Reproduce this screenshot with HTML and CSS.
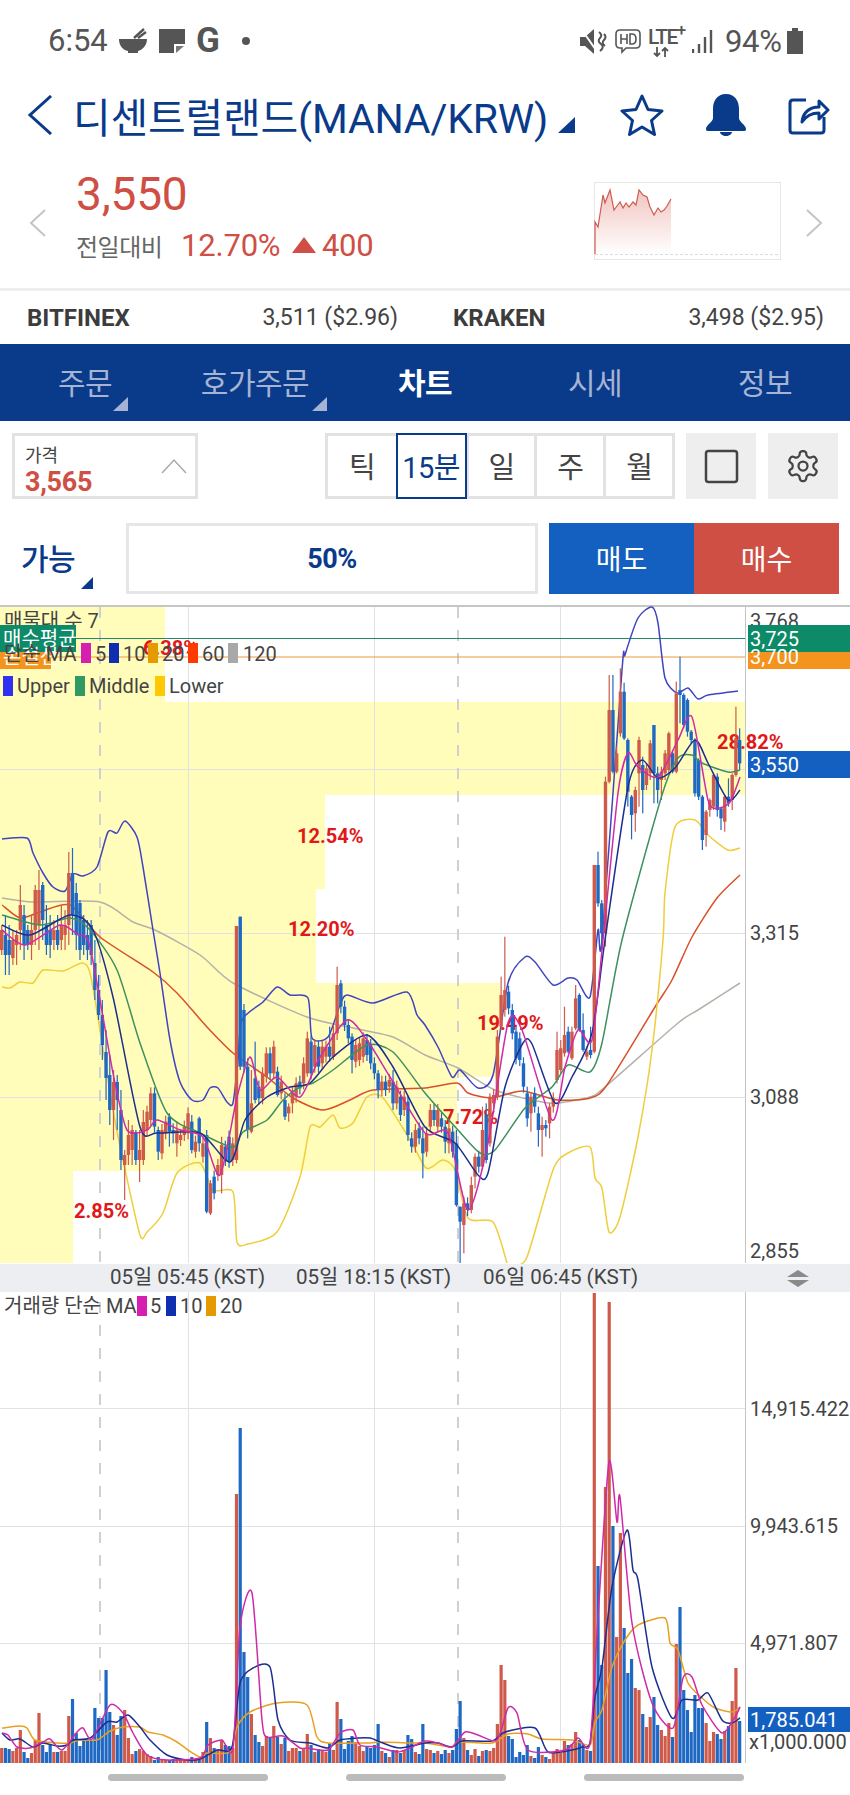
FILE: index.html
```html
<!DOCTYPE html>
<html lang="ko">
<head>
<meta charset="utf-8">
<title>디센트럴랜드 차트</title>
<link rel="stylesheet" href="styles.css">
</head>
<body>
<div class="page">
  <div class="status">
    <span class="clock">6:54</span>
    <svg class="ico-bowl" width="30" height="26" viewBox="0 0 30 26"><path d="M1 11h28c0 7-5 11-9 12v2H10v-2C5 22 1 18 1 11z" fill="#555"/><path d="M16 10L26 1M20 10l8-6" stroke="#555" stroke-width="2.4"/></svg>
    <svg class="ico-note" width="26" height="24" viewBox="0 0 26 24"><path d="M0 0h26v15h-11v9H0z" fill="#555"/><path d="M17 24v-7h8z" fill="#777"/></svg>
    <span class="g">G</span>
    <span class="dot"></span>
    <span class="status-gap"></span>
    <svg class="ico-mute" width="27" height="25" viewBox="0 0 27 25"><path d="M0 8h5l9-8v25l-9-8H0z" fill="#555"/><path d="M2 1l16 23" stroke="#fff" stroke-width="2"/><path d="M19 3q4 3 1 6t1 6-1 7M24 5q3 3 0 6t1 6" fill="none" stroke="#555" stroke-width="2"/></svg>
    <svg class="ico-hd" width="26" height="26" viewBox="0 0 26 26"><path d="M5 2h16q4 0 4 4v10q0 4-4 4H11l-4 4v-4H5q-4 0-4-4V6q0-4 4-4z" fill="none" stroke="#555" stroke-width="1.6"/><path d="M6 6v10M12 6v10M6 11h6M15 6v10h2q4 0 4-5t-4-5z" fill="none" stroke="#555" stroke-width="1.6"/></svg>
    <div class="lte">
      <span class="lte-text">LTE<sup>+</sup></span>
      <svg width="16" height="10" viewBox="0 0 16 10"><path d="M4 0v9M1 6l3 3 3-3M12 10V1M9 4l3-3 3 3" fill="none" stroke="#555" stroke-width="1.8"/></svg>
    </div>
    <svg class="ico-signal" width="22" height="24" viewBox="0 0 22 24"><path d="M1 24v-4M7 24V15M13 24V8M19 24V1" stroke="#555" stroke-width="2.4"/></svg>
    <span class="batt-text">94%</span>
    <svg class="ico-batt" width="16" height="26" viewBox="0 0 16 26"><path d="M5 0h6v3h5v23H0V3h5z" fill="#555"/></svg>
  </div>

  <div class="title-row">
    <svg class="back" width="26" height="40" viewBox="0 0 26 40"><path d="M24 1L3 20l21 19" fill="none" stroke="#0a3a8a" stroke-width="3"/></svg>
    <h1 class="title">디센트럴랜드(MANA/KRW)</h1>
    <span class="title-tri"></span>
    <svg class="star" width="44" height="42" viewBox="0 0 44 42"><path d="M22 2l6 13.500 14 1.500-10.500 9.500 3 14L22 33l-12.500 7.500 3-14L2 17l14-1.500z" fill="none" stroke="#0a3a8a" stroke-width="3" stroke-linejoin="round"/></svg>
    <svg class="bell" width="40" height="42" viewBox="0 0 40 42"><path d="M20 0c9 0 13 7 13 15v9c0 4 7 7 7 11 0 2-1 2-3 2H3c-2 0-3 0-3-2 0-4 7-7 7-11v-9C7 7 11 0 20 0zM14 38h12c0 2-3 4-6 4s-6-2-6-4z" fill="#0a3a8a"/></svg>
    <svg class="share" width="42" height="40" viewBox="0 0 42 40"><path d="M18 5H5Q2 5 2 8v27q0 3 3 3h28q3 0 3-3V22" fill="none" stroke="#0a3a8a" stroke-width="3"/><path d="M14 27c1-10 8-15 17-15V6l9 9-9 9v-6c-8 0-13 3-17 9z" fill="none" stroke="#0a3a8a" stroke-width="3" stroke-linejoin="round"/></svg>
  </div>

  <div class="quote">
    <svg class="nav-l" width="18" height="28" viewBox="0 0 18 28"><path d="M16 1L2 14l14 13" fill="none" stroke="#c4c4c4" stroke-width="2"/></svg>
    <div class="quote-main">
      <div class="price">3,550</div>
      <div class="change"><span class="change-label">전일대비</span><span class="pct">12.70%</span><span class="up-tri"></span><span class="amt">400</span></div>
    </div>
    <svg class="mini" width="187" height="78" viewBox="595 182 187 78">
      <defs><linearGradient id="miniFill" x1="0" y1="0" x2="0" y2="1"><stop offset="0" stop-color="#f1c4bf"/><stop offset="1" stop-color="#fff"/></linearGradient></defs>
      <rect x="595.500" y="182.500" width="186" height="77" fill="#fff" stroke="#e6e6e6"/>
      <path d="M596 254V222L599 227 604 195 606 203 611 190 615 210 618 206 621 202 624 208 627 203 630 207 634 202 637 205 640 190 644 195 648 197 651 207 655 215 659 208 662 212 665 210 668 206 672 199V254z" fill="url(#miniFill)"/>
      <path d="M596 254V222L599 227 604 195 606 203 611 190 615 210 618 206 621 202 624 208 627 203 630 207 634 202 637 205 640 190 644 195 648 197 651 207 655 215 659 208 662 212 665 210 668 206 672 199" fill="none" stroke="#cf5a50" stroke-width="1.200"/>
      <path d="M596 254.500H781" stroke="#ddd" stroke-dasharray="3 2"/>
    </svg>
    <svg class="nav-r" width="18" height="28" viewBox="0 0 18 28"><path d="M2 1l14 13L2 27" fill="none" stroke="#c4c4c4" stroke-width="2"/></svg>
  </div>

  <div class="exchanges">
    <div class="ex ex-a"><b>BITFINEX</b><span>3,511 ($2.96)</span></div>
    <div class="ex ex-b"><b>KRAKEN</b><span>3,498 ($2.95)</span></div>
  </div>

  <nav class="tabs">
    <a class="tab corner">주문</a>
    <a class="tab corner">호가주문</a>
    <a class="tab active">차트</a>
    <a class="tab">시세</a>
    <a class="tab">정보</a>
  </nav>

  <div class="tools">
    <div class="price-box">
      <div class="pb-text"><span class="pb-label">가격</span><span class="pb-val">3,565</span></div>
      <svg width="26" height="16" viewBox="0 0 26 16"><path d="M1 15L13 2l12 13" fill="none" stroke="#aaa" stroke-width="1.500"/></svg>
    </div>
    <div class="seg">
      <span class="seg-i">틱</span>
      <span class="seg-i sel">15분</span>
      <span class="seg-i">일</span>
      <span class="seg-i">주</span>
      <span class="seg-i">월</span>
    </div>
    <div class="sq"><svg width="35" height="35" viewBox="0 0 35 35"><rect x="2" y="2" width="31" height="31" rx="2.500" fill="none" stroke="#444" stroke-width="2.500"/></svg></div>
    <div class="sq"><svg width="36" height="36" viewBox="0 0 24 24" fill="none" stroke="#444" stroke-width="1.500"><path d="M12.220 2h-.44a2 2 0 0 0-2 2v.18a2 2 0 0 1-1 1.730l-.43.25a2 2 0 0 1-2 0l-.15-.08a2 2 0 0 0-2.730.73l-.22.38a2 2 0 0 0 .73 2.730l.15.1a2 2 0 0 1 1 1.720v.51a2 2 0 0 1-1 1.740l-.15.09a2 2 0 0 0-.73 2.730l.22.38a2 2 0 0 0 2.730.73l.15-.08a2 2 0 0 1 2 0l.43.25a2 2 0 0 1 1 1.730V20a2 2 0 0 0 2 2h.44a2 2 0 0 0 2-2v-.18a2 2 0 0 1 1-1.730l.43-.25a2 2 0 0 1 2 0l.15.08a2 2 0 0 0 2.730-.73l.22-.39a2 2 0 0 0-.73-2.730l-.15-.08a2 2 0 0 1-1-1.740v-.5a2 2 0 0 1 1-1.740l.15-.09a2 2 0 0 0 .73-2.730l-.22-.38a2 2 0 0 0-2.730-.73l-.15.08a2 2 0 0 1-2 0l-.43-.25a2 2 0 0 1-1-1.730V4a2 2 0 0 0-2-2z"/><circle cx="12" cy="12" r="3"/></svg></div>
  </div>

  <div class="order">
    <div class="able">가능</div>
    <div class="ratio">50%</div>
    <div class="sell">매도</div>
    <div class="buy">매수</div>
  </div>

  <svg class="chart" width="850" height="1165" viewBox="0 605 850 1165">
    <rect x="0" y="605" width="850" height="2" fill="#c6c6c6"/>
    <!-- volume profile zones -->
    <g fill="#fffdb9">
      <rect x="0" y="607" width="165" height="95"/>
      <rect x="0" y="702" width="745" height="93"/>
      <rect x="0" y="795" width="325" height="94"/>
      <rect x="0" y="889" width="316" height="94"/>
      <rect x="0" y="983" width="500" height="94"/>
      <rect x="0" y="1077" width="457" height="94"/>
      <rect x="0" y="1171" width="73" height="92"/>
    </g>
    <!-- grid -->
    <g stroke="#e2e2e2" stroke-width="1">
      <path d="M188.500 607V1263M374.500 607V1263M560.500 607V1263"/>
      <path d="M0 769.500H745M0 933.500H745M0 1097.500H745"/>
      <path d="M188.500 1292V1763M374.500 1292V1763M560.500 1292V1763"/>
      <path d="M0 1408.500H745M0 1526.500H745M0 1643.500H745"/>
    </g>
    <g stroke="#d0d0d0" stroke-width="2" stroke-dasharray="11 12">
      <path d="M100 607V1263M458 607V1263M100 1302V1763M458 1302V1763"/>
    </g>
    <path d="M745.500 607V1263M745.500 1292V1763" stroke="#c4c4c4"/>

    <g class="pct-label">
      <text x="143" y="655">6.38%</text>
      <text x="297" y="843">12.54%</text>
      <text x="288" y="936">12.20%</text>
      <text x="717" y="749">28.82%</text>
      <text x="477" y="1030">19.49%</text>
      <text x="443" y="1124">7.72%</text>
      <text x="74" y="1218">2.85%</text>
    </g>

    <!-- price level lines -->
    <path d="M0 638.500H745" stroke="#1f8a70" stroke-width="1.200"/>
    <path d="M0 657H745" stroke="#ef9a3c" stroke-width="1.200"/>

    <!-- long moving averages and bands drawn beneath candles -->
    <g fill="none" stroke-width="1.500" stroke-linejoin="round">
      <polyline stroke="#b4b2a8" points="2,898 33,902 100,902 133,922 155,930 200,955 233,983 307,1017 353,1028 393,1037 425,1055 458,1068 495,1090 542,1102 558,1103 590,1097 605,1087 678,1023 698,1010 740,983"/>
      <polyline stroke="#d9502a" points="2,905 20,918 40,912 70,905 100,937 153,972 177,993 207,1027 233,1053 267,1077 293,1098 323,1110 350,1100 373,1090 425,1088 457,1083 468,1093 492,1098 522,1091 558,1100 590,1098 607,1085 655,1007 672,980 692,937 717,898 740,875"/>
      <polyline stroke="#f0cd3a" points="2,987 10,988 20,982 33,983 43,970 63,971 82,963 90,973 100,1030 113,1110 123,1160 140,1235 147,1232 163,1213 177,1173 200,1163 213,1190 233,1192 237,1242 248,1244 277,1232 300,1177 310,1127 320,1127 333,1115 340,1128 353,1123 367,1097 383,1098 410,1140 425,1167 432,1167 443,1160 455,1170 468,1218 493,1222 507,1263"/>
      <polyline stroke="#f0cd3a" points="513,1265 527,1257 553,1170 568,1153 590,1147 595,1178 602,1188 609,1232 620,1217 638,1137 652,1050 663,940 665,893 675,827 695,820 708,835 728,850 740,848"/>
      <polyline stroke="#4044c0" points="2,839 27,838 33,853 43,873 53,887 65,891 73,874 83,876 97,867 108,832 117,833 125,821 137,837 143,867 153,930 160,973 170,1040 180,1082 192,1100 203,1100 210,1088 218,1088 227,1102 233,1103 238,1060 242,1020 263,1002 277,987 290,995 308,998 312,1038 328,1037 340,1005 347,995 373,1003 407,992 417,1015 425,1025 438,1047 452,1077 460,1070 478,1088 493,1075 508,983 525,957 535,962 553,985 568,978 577,980 590,997 598,930 602,940 622,670 625,655 638,618 652,607 658,623 665,678 677,693 688,688 698,699 708,695 738,691"/>
    </g>

    <g id="candles"></g>

    <g fill="none" stroke-width="1.500" stroke-linejoin="round">
      <polyline stroke="#3f9060" points="2,915 40,925 70,918 90,930 117,970 140,1043 167,1113 200,1133 233,1147 243,1132 267,1120 283,1100 300,1087 313,1083 333,1070 367,1045 393,1052 425,1093 458,1130 480,1153 495,1150 525,1108 552,1087 568,1065 590,1072 602,1043 622,940 662,795 678,758 692,755 702,763 728,772 740,770"/>
      <polyline stroke="#1c2f8f" points="2,925 30,935 70,915 93,930 113,997 140,1127 157,1133 200,1133 230,1162 245,1120 267,1097 290,1087 310,1083 333,1057 367,1035 393,1067 425,1127 455,1143 478,1175 488,1173 505,1087 523,1043 532,1044 555,1103 572,1077 592,1033 605,940 628,787 642,760 658,778 675,768 695,740 708,763 728,800 740,790"/>
      <polyline stroke="#d02aa8" points="2,930 25,945 60,925 78,935 90,947 113,1073 127,1130 147,1130 157,1120 180,1130 203,1137 220,1175 237,1097 250,1057 260,1090 277,1077 300,1097 320,1057 347,1020 367,1040 390,1077 425,1133 448,1133 468,1210 488,1143 508,1023 522,1030 552,1120 565,1067 578,1030 592,1040 603,940 618,793 628,753 638,767 658,777 678,740 692,717 708,800 718,808 730,802 740,777"/>
    </g>

    <!-- upper left legend -->
    <g class="lbl">
      <text x="4" y="628">매물대 수 7</text>
    </g>
    <rect x="0" y="625" width="76" height="27" fill="#0d8a68"/>
    <text class="lbl-w" x="3" y="646">매수평균</text>
    <rect x="0" y="652" width="51" height="17" fill="#f4941e"/>
    <text class="lbl-w" x="3" y="664">손절선</text>
    <g class="lbl">
      <text x="4" y="661">단순 MA</text>
      <text x="95" y="661">5</text>
      <text x="123" y="661">10</text>
      <text x="162" y="661">20</text>
      <text x="202" y="661">60</text>
      <text x="243" y="661">120</text>
      <text x="17" y="693">Upper</text>
      <text x="89" y="693">Middle</text>
      <text x="169" y="693">Lower</text>
    </g>
    <rect x="81" y="643" width="10" height="20" fill="#d61fb0"/>
    <rect x="109" y="643" width="10" height="20" fill="#0f2fb0"/>
    <rect x="148" y="643" width="10" height="20" fill="#e49a00"/>
    <rect x="188" y="643" width="10" height="20" fill="#ff3a00"/>
    <rect x="228" y="643" width="10" height="20" fill="#a8a8a8"/>
    <rect x="3" y="676" width="10" height="20" fill="#3030f0"/>
    <rect x="75" y="676" width="10" height="20" fill="#2f9a62"/>
    <rect x="155" y="676" width="10" height="20" fill="#ffc800"/>

    <!-- price axis -->
    <g class="lbl">
      <text x="750" y="628">3,768</text>
      <text x="750" y="940">3,315</text>
      <text x="750" y="1104">3,088</text>
      <text x="750" y="1258">2,855</text>
    </g>
    <rect x="748" y="625" width="102" height="27" fill="#0d8a68"/>
    <text class="lbl-w" x="750" y="646">3,725</text>
    <rect x="748" y="652" width="102" height="17" fill="#f4941e"/>
    <text class="lbl-w" x="750" y="664">3,700</text>
    <rect x="748" y="751" width="102" height="27" fill="#1460c0"/>
    <text class="lbl-w" x="750" y="772">3,550</text>

    <!-- time strip -->
    <rect x="0" y="1264" width="850" height="28" fill="#eceef2"/>
    <g class="lbl lbl-time">
      <text x="110" y="1284">05일 05:45 (KST)</text>
      <text x="296" y="1284">05일 18:15 (KST)</text>
      <text x="483" y="1284">06일 06:45 (KST)</text>
    </g>
    <path d="M798 1270l11 7h-22zM787 1280h22l-11 7z" fill="#8a8a8a"/>

    <!-- volume panel -->
    <g id="vol"></g>
    <g fill="none" stroke-width="1.500" stroke-linejoin="round">
      <polyline stroke="#e8a020" points="2,1728 20,1726 27,1728 35,1740 57,1743 70,1743 80,1740 97,1740 110,1731 123,1727 140,1727 148,1732 163,1735 177,1742 188,1750 200,1757 207,1753 230,1752 237,1727 250,1712 277,1703 307,1705 317,1737 328,1743 367,1743 380,1742 410,1743 425,1743 452,1747 458,1742 492,1743 508,1734 528,1734 542,1739 572,1740 590,1745 595,1722 602,1710 612,1667 625,1640 638,1625 665,1618 670,1643 678,1650 688,1683 702,1698 715,1708 732,1712 740,1707"/>
      <polyline stroke="#1c2f8f" points="2,1733 10,1740 20,1739 33,1747 43,1743 57,1746 67,1745 73,1740 90,1738 107,1722 117,1722 128,1715 140,1727 150,1740 167,1755 187,1760 200,1759 217,1750 232,1747 240,1683 253,1668 270,1667 278,1720 290,1740 310,1743 328,1748 340,1740 357,1738 370,1738 383,1743 400,1748 425,1743 438,1743 452,1747 462,1741 492,1741 505,1732 535,1728 548,1752 572,1750 582,1747 590,1743 595,1697 602,1667 612,1587 627,1530 633,1570 638,1580 652,1667 672,1718 682,1700 698,1700 708,1693 722,1720 732,1723 740,1718"/>
      <polyline stroke="#d02aa8" points="2,1733 8,1735 17,1747 30,1748 43,1742 50,1739 62,1750 77,1732 83,1728 92,1739 110,1705 123,1713 133,1733 147,1755 167,1760 200,1758 208,1745 222,1740 233,1748 240,1627 252,1593 262,1720 267,1737 283,1736 300,1748 307,1748 328,1750 340,1733 353,1730 360,1745 377,1747 397,1752 410,1748 425,1741 438,1743 452,1747 465,1732 478,1735 497,1740 508,1708 517,1713 528,1750 565,1750 578,1738 590,1743 598,1617 609,1462 617,1522 620,1497 632,1623 652,1703 673,1728 683,1678 692,1677 702,1705 722,1733 735,1717 740,1707"/>
    </g>
    <g class="lbl">
      <text x="4" y="1313">거래량 단순 MA</text>
      <text x="150" y="1313">5</text>
      <text x="180" y="1313">10</text>
      <text x="220" y="1313">20</text>
      <text x="750" y="1416">14,915.422</text>
      <text x="750" y="1533">9,943.615</text>
      <text x="750" y="1650">4,971.807</text>
      <text x="749" y="1749">x1,000.000</text>
    </g>
    <rect x="137" y="1296" width="10" height="20" fill="#d61fb0"/>
    <rect x="166" y="1296" width="10" height="20" fill="#0f2fb0"/>
    <rect x="206" y="1296" width="10" height="20" fill="#e49a00"/>
    <rect x="748" y="1707" width="102" height="25" fill="#1460c0"/>
    <text class="lbl-w" x="750" y="1727">1,785.041</text>
  </svg>

  <div class="handles">
    <span class="handle"></span>
    <span class="handle"></span>
    <span class="handle"></span>
  </div>
</div>
<script src="chart.js"></script>
</body>
</html>
```
FILE: styles.css
```css
* { box-sizing: border-box; }
html, body { margin: 0; padding: 0; background: #fff; }
body { font-family: Roboto, "Noto Sans CJK KR", sans-serif; color: #444; }
.page { width: 850px; height: 1795px; overflow: hidden; }

.status { height: 82px; display: flex; align-items: center; padding-left: 48px; color: #555; }
.clock { font-size: 31px; width: 70px; margin-top: -1px; }
.ico-bowl { margin-right: 11px; }
.ico-note { margin-right: 11px; }
.g { font-size: 35px; font-weight: 700; width: 46px; margin-top: -1px; }
.dot { width: 8px; height: 8px; border-radius: 50%; background: #555; }
.status-gap { flex: 1; }
.ico-mute { margin-right: 8px; }
.ico-hd { margin-right: 7px; }
.lte { width: 44px; display: flex; flex-direction: column; align-items: flex-start; margin-top: 2px; }
.lte svg { margin-left: 5px; }
.lte-text { font-size: 21px; line-height: 19px; font-weight: 500; letter-spacing: -1.6px; }
.lte sup { font-size: 17px; line-height: 0; }
.ico-signal { margin-right: 11px; }
.batt-text { font-size: 31px; width: 62px; letter-spacing: -.3px; }
.ico-batt { margin-right: 47px; }

.title-row { height: 66px; display: flex; align-items: center; padding-left: 27px; color: #0a3a8a; }
.title { margin: 0 0 0 20px; font-size: 41px; font-weight: 400; letter-spacing: -.2px; white-space: nowrap; width: 485px; }
.title-tri { width: 17px; height: 16px; background: #0a3a8a; clip-path: polygon(100% 0, 100% 100%, 0 100%); margin-top: 20px; }
.star { margin-left: 45px; }
.bell { margin-left: 42px; }
.share { margin-left: 42px; }

.quote { height: 143px; display: flex; align-items: flex-start; border-bottom: 3px solid #eee; }
.nav-l { margin: 61px 0 0 29px; }
.quote-main { width: 518px; margin-left: 29px; padding-top: 19px; }
.price { font-size: 46px; line-height: 54px; color: #d04f44; letter-spacing: -.2px; }
.change { display: flex; align-items: center; height: 40px; margin-top: 4px; }
.change-label { font-size: 24px; color: #666; width: 105px; letter-spacing: -.5px; }
.pct { font-size: 31px; color: #d04f44; width: 111px; letter-spacing: -.2px; }
.up-tri { width: 24px; height: 16px; background: #d04f44; clip-path: polygon(50% 0, 100% 100%, 0 100%); margin-right: 6px; }
.amt { font-size: 31px; color: #d04f44; letter-spacing: -.3px; }
.mini { margin-top: 34px; flex: none; }
.nav-r { margin: 61px 0 0 24px; }

.exchanges { height: 53px; display: grid; grid-template-columns: 426px 1fr; align-items: center; padding-left: 27px; font-size: 23px; color: #3c3c3c; }
.ex { display: flex; justify-content: space-between; }
.ex b { font-weight: 700; font-size: 24px; }
.ex span { color: #444; }
.ex-a { width: 371px; }
.ex-b { width: 371px; }

.tabs { height: 77px; background: #0a3a8a; display: grid; grid-template-columns: repeat(5, 170px); }
.tab { position: relative; display: flex; align-items: center; justify-content: center; padding-bottom: 4px; font-size: 30px; color: #a5b4d4; letter-spacing: -.5px; }
.tab.active { color: #fff; font-weight: 700; }
.corner::after { content: ""; position: absolute; top: 53px; width: 15px; height: 14px; background: #a5b4d4; clip-path: polygon(100% 0, 100% 100%, 0 100%); }
.tab.corner:nth-child(1)::after { left: 113px; }
.tab.corner:nth-child(2)::after { left: 142px; }

.tools { height: 102px; padding: 12px 12px 0; display: flex; align-items: flex-start; }
.price-box { width: 186px; height: 66px; border: 3px solid #e2e2e2; display: flex; align-items: center; justify-content: space-between; padding: 0 8px 0 10px; }
.pb-text { display: flex; flex-direction: column; padding-top: 7px; }
.pb-label { font-size: 18px; line-height: 24px; color: #444; }
.pb-val { font-size: 27px; line-height: 28px; font-weight: 700; color: #d04f44; letter-spacing: -.3px; }
.seg { margin-left: 127px; width: 351px; height: 66px; border: 3px solid #e2e2e2; display: grid; grid-template-columns: repeat(5, 1fr); font-size: 29px; color: #444; }
.seg-i { display: flex; align-items: center; justify-content: center; padding-bottom: 2px; border-left: 3px solid #e2e2e2; letter-spacing: -.5px; white-space: nowrap; }
.seg-i:first-child { border-left: 0; }
.seg-i.sel { border: 2px solid #0a3a8a; margin: -3px -1px; color: #0a3a8a; z-index: 1; background: #fff; }
.sq { width: 70px; height: 66px; margin-left: 11px; background: #eee; display: flex; align-items: center; justify-content: center; }
.sq + .sq { margin-left: 12px; }

.order { height: 71px; display: flex; align-items: stretch; margin-bottom: 11px; }
.able { position: relative; width: 126px; padding: 0 0 3px 21px; display: flex; align-items: center; font-size: 30px; font-weight: 500; color: #0a3a8a; letter-spacing: -.5px; }
.able::after { content: ""; position: absolute; left: 81px; top: 54px; width: 12px; height: 12px; background: #0a3a8a; clip-path: polygon(100% 0, 100% 100%, 0 100%); }
.ratio { width: 412px; border: 3px solid #e6e6e6; display: flex; align-items: center; justify-content: center; font-size: 27px; font-weight: 700; color: #0a3a8a; letter-spacing: -.5px; }
.sell, .buy { width: 145px; padding-bottom: 2px; display: flex; align-items: center; justify-content: center; color: #fff; font-size: 28px; }
.sell { margin-left: 11px; background: #1460c0; }
.buy { background: #d04f44; }

.chart { display: block; }
.pct-label text { font-size: 20px; font-weight: 700; fill: #e01818; }
.lbl text { font-size: 20px; fill: #444; }
.lbl-time text { font-size: 20.6px; }
.lbl-w { font-size: 20px; fill: #fff; }

.handles { height: 25px; display: flex; padding-top: 4px; padding-left: 108px; gap: 78px; }
.handle { width: 160px; height: 7px; border-radius: 4px; background: #bbb; }
```
FILE: chart.js
```js
// Candles and volume bars share one index; x = 1.7 + 3.727 * i
var volume = "R15 B15 B14 R12 R15 R33 B11 B5 R10 R23 R50 B18 B11 B18 R11 B11 R12 R12 R47 B64 B30 B17 B22 B22 B22 B55 B45 B45 B93 B51 R38 B28 B47 R53 R25 R9 B12 R14 R12 R9 R7 B3 B6 R3 R3 B3 B4 R4 R4 R3 R3 B6 R4 B5 R11 B41 R25 B15 R13 R23 B18 B17 R15 R269 B335 B111 B86 R49 B28 B21 R17 R27 B25 R37 B26 R19 B25 R12 R15 R15 B12 R15 R29 B18 R11 B14 R12 R11 B20 R13 R61 B44 B14 B22 B27 R21 R17 R12 B17 B15 B18 B39 R12 B10 R6 B13 R13 B10 R13 B28 B24 R11 B9 B39 R14 R13 B10 R12 B9 B13 R10 B13 B34 B62 R25 B13 R8 R14 B7 R12 B13 R12 R15 R39 R98 R83 B27 B24 B6 B11 B8 B18 R7 B5 B16 R8 B6 R4 R10 R14 R10 R22 B18 R19 R31 B23 B19 R13 B12 R470 B197 B98 R276 R461 B237 R126 R230 B135 B90 B104 R75 R73 B49 R36 R46 B66 B38 R33 R27 R40 B26 R119 B156 B73 B53 B31 B68 B55 B55 R40 R22 R31 B29 B24 R32 B37 R62 R95 B42".split(" ");

// [top, bottom, high, low]; high and low may be left out
var absolute = [
  [930,950,925,955],[935,955,915,975],[940,955,925,975],[940,958,930,965],[935,945,930,965],
  [905,930,885,950],[915,945,905,960],[930,945,925,950],[930,945,915,960],[890,930,885,945],
  [890,925,870,950],[885,920,882,940],[925,945,905,955],[930,945,915,958],[930,940,920,950],
  [930,945,915,950],[925,940,905,950],[925,935,910,950],[873,925,852,945],[873,915,848,935],
  [893,935,883,950],[903,950,900,960],[920,945,915,955],[935,950,920,960],[925,955,920,965],
  [963,990,940,1000],[990,1015,975,1020],[1015,1045,1000,1060],[1052,1078,1030,1100],[1075,1110,1055,1125],
  [1082,1110,1070,1140],[1082,1100,1075,1130],[1110,1160,1090,1170],[1155,1165,1150,1200],[1135,1155,1120,1165],
  [1130,1150,1125,1165],[1132,1160,1130,1165],[1150,1160,1130,1182],[1122,1160,1110,1165]
];
// the rest read off the picture in thirds of a pixel above y = 930
var lowerA = [
  [545,600],[490,570],[490,590],[600,665,590,690],[600,670],[575,610],[560,605,550,650],[600,610,580,640],[600,640,575,680],
  [615,630],[590,615],[550,610],[575,660,555,670],[635,665],[565,640,560,665],[640,680],[615,845,600,850],[760,850,750,855],
  [740,790],[705,735],[645,735,620,790],[650,690],[620,695],[640,690],
  [-12,690,-12,700],[-40,410,-40,420],[240,410],[410,600,385,625],[520,605,420,610],[445,510,335,520],[470,505],[430,505],[370,440],
  [370,430],[350,430],[425,495,410,500],[455,490],[510,560,490,570],[530,550,520,575],[490,520,470,550],[460,500],[455,475],
  [400,460],[325,430,305,440],[335,430],[345,410],[350,410],[350,400],[350,380],[350,380,290,395],[310,380,285,390],[165,310,110,330],
  [160,230,150,250],[230,285],[285,325,270,340],[320,390,310,430],[345,395],[340,390],[325,380],[330,375],[345,400],[400,430],
  [430,480,420,505],[455,480],[455,480],[450,470],[455,520,420,540],[470,520],[500,555],[500,540],[515,615],[625,650],[600,650],[595,625],[625,670,590,745],
  [610,665,590,680],[540,590],[540,570],[540,590],[565,590],[590,635,570,670],[595,640,570,670],[605,665],[640,825,600,830],[830,875,830,1005],
  [820,885,800,970],[820,840],[765,840,740,850],[680,740,670,775],[680,710],[600,710,530,720],[555,690,520,700],[500,640,490,650],[495,520],
  [320,500,300,510],[195,290,140,300],[180,240,20,260],[185,235],[240,310],[305,385],[325,390],[400,470],[490,565,470,590],[500,550,490,605],
  [490,530],[550,600,530,650],[585,600,560,680],[585,595,570,620],[530,580,520,625],[505,530],[360,450,305,460],[355,420,330,430],[315,370,230,380],
  [305,365,290,370],[305,385,290,390],[205,295,165,300],[195,300,190,305],[300,360,250,365],[365,380,350,390],[360,375,290,385],[-195,365,-195,370]
];
// thirds of a pixel below y = 600
var upper = [
  [795,910,755,920],[910,1000,900,1050],[545,1000,530,1040],[330,545,225,550],[330,515,225,520],[460,515,440,520],[275,400,205,410],[275,415,248,420],
  [420,575,415,620],[590,645,585,718],[570,640,560,695],[420,520,410,620],[495,570,470,640],[505,555,490,570],[430,520,420,540],[375,520,375,610],
  [520,570,500,610],[515,540,500,600],[460,520,450,540],[400,510,395,520],[460,515,450,520],[280,515,245,520],[270,285,170,370],[285,375,280,385],
  [300,395,295,410],[395,420,390,430],[420,580,415,590],[480,590,475,600],[590,720,585,750],[635,705,630,740],[600,630,595,650],[525,620,520,630],
  [530,630,520,650],[625,655,620,690],[590,665,585,695],[590,610,535,620],[525,600,520,630],[415,525,320,530],[420,490,385,510]
];

var candles = absolute
  .concat(lowerA.map(function (c) { return shift(c, 930); }))
  .concat(upper.map(function (c) { return shift(c, 600); }));

function shift(c, base) {
  var top = c[0], bot = c[1];
  var hi = c.length > 2 ? c[2] : top - 18;
  var lo = c.length > 3 ? c[3] : bot + 18;
  return [base + top / 3, base + bot / 3, base + hi / 3, base + lo / 3];
}

var NS = "http://www.w3.org/2000/svg";
var BLUE = "#1f68c4", RED = "#cf5a4a";

function rect(parent, x, y, w, h, fill) {
  var r = document.createElementNS(NS, "rect");
  r.setAttribute("x", x.toFixed(2));
  r.setAttribute("y", y.toFixed(2));
  r.setAttribute("width", w);
  r.setAttribute("height", Math.max(h, 1).toFixed(2));
  r.setAttribute("fill", fill);
  parent.appendChild(r);
}

var volGroup = document.getElementById("vol");
var candleGroup = document.getElementById("candles");

volume.forEach(function (v, i) {
  var colour = v.charAt(0) === "R" ? RED : BLUE;
  var h = Math.min(+v.slice(1), 471);
  var x = 1.7 + 3.727 * i;
  rect(volGroup, x - 1.6, 1763 - h, 3.2, h, colour);
  var c = candles[i];
  if (c) {
    rect(candleGroup, x - 0.6, Math.max(c[2], 607), 1.2, Math.min(c[3], 1263) - Math.max(c[2], 607), colour);
    rect(candleGroup, x - 1.7, Math.max(c[0], 607), 3.4, Math.min(c[1], 1263) - Math.max(c[0], 607), colour);
  }
});

// Draw each indicator as a smooth curve through its sampled points
document.querySelectorAll(".chart polyline").forEach(function (line) {
  var p = line.getAttribute("points").trim().split(/\s+/).map(function (s) {
    return s.split(",").map(Number);
  });
  var d = "M" + p[0][0] + " " + p[0][1];
  for (var i = 0; i < p.length - 1; i++) {
    var a = p[Math.max(i - 1, 0)], b = p[i], c = p[i + 1], e = p[Math.min(i + 2, p.length - 1)];
    d += "C" + (b[0] + (c[0] - a[0]) / 8).toFixed(1) + " " + (b[1] + (c[1] - a[1]) / 8).toFixed(1) +
      " " + (c[0] - (e[0] - b[0]) / 8).toFixed(1) + " " + (c[1] - (e[1] - b[1]) / 8).toFixed(1) +
      " " + c[0] + " " + c[1];
  }
  var path = document.createElementNS(NS, "path");
  path.setAttribute("d", d);
  path.setAttribute("stroke", line.getAttribute("stroke"));
  line.parentNode.replaceChild(path, line);
});
```
